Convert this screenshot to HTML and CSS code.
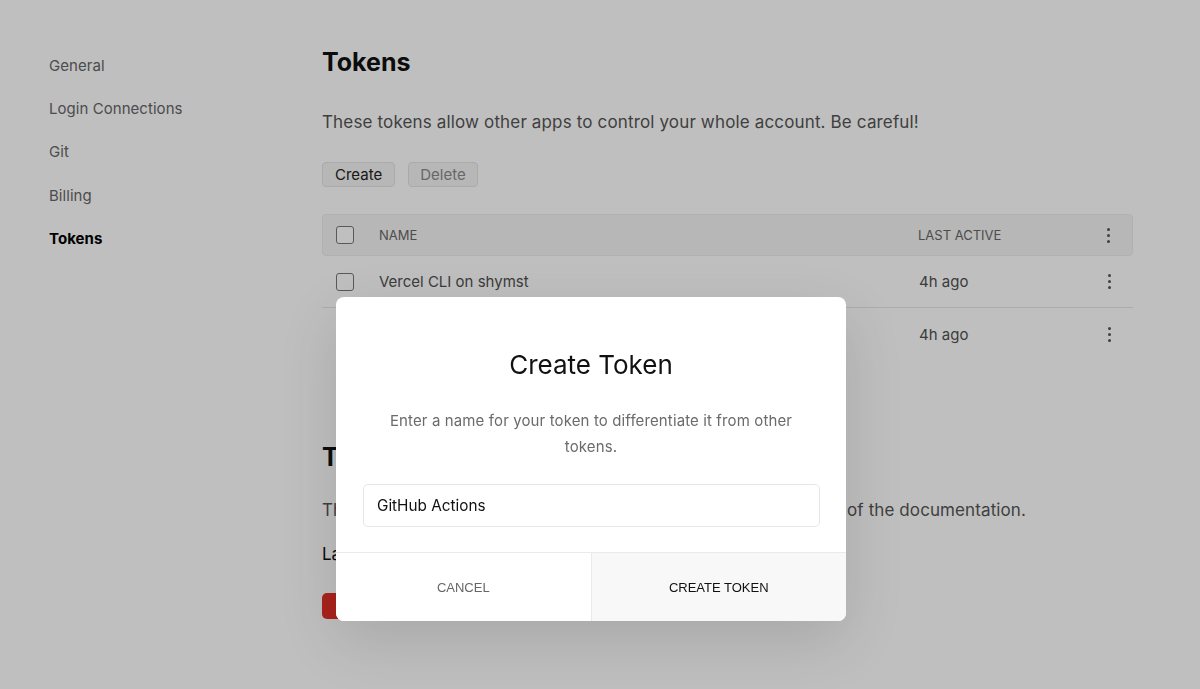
FILE: index.html
```html
<!DOCTYPE html>
<html lang="en">
<head>
<meta charset="utf-8">
<title>Tokens</title>
<link rel="stylesheet" href="styles.css">
</head>
<body>
<div class="page">
  <nav class="sidebar">
    <a class="nav-item">General</a>
    <a class="nav-item">Login Connections</a>
    <a class="nav-item">Git</a>
    <a class="nav-item">Billing</a>
    <a class="nav-item active">Tokens</a>
  </nav>
  <main class="main">
    <h1 class="title">Tokens</h1>
    <p class="lead">These tokens allow other apps to control your whole account. Be careful!</p>
    <div class="actions">
      <button class="btn">Create</button>
      <button class="btn disabled">Delete</button>
    </div>
    <div class="table">
      <div class="row head">
        <span class="cell-check"><span class="checkbox"></span></span>
        <span>NAME</span>
        <span>LAST ACTIVE</span>
        <span class="kebab"><i></i><i></i><i></i></span>
      </div>
      <div class="row">
        <span class="cell-check"><span class="checkbox"></span></span>
        <span>Vercel CLI on shymst</span>
        <span>4h ago</span>
        <span class="kebab"><i></i><i></i><i></i></span>
      </div>
      <div class="row">
        <span class="cell-check"><span class="checkbox"></span></span>
        <span>GitHub Integration</span>
        <span>4h ago</span>
        <span class="kebab"><i></i><i></i><i></i></span>
      </div>
    </div>
    <h2 class="title second">Token Limits</h2>
    <p class="lead tight">The number of tokens is limited. See more in the Tokens section of the documentation.</p>
    <p class="plain">Last revoked: never</p>
    <button class="btn-danger">Revoke All Tokens</button>
  </main>
</div>
<div class="overlay"></div>
<div class="modal">
  <h3 class="modal-title">Create Token</h3>
  <p class="modal-desc">Enter a name for your token to differentiate it from other tokens.</p>
  <div class="input">GitHub Actions</div>
  <div class="modal-footer">
    <button class="mbtn cancel">CANCEL</button>
    <button class="mbtn confirm">CREATE TOKEN</button>
  </div>
</div>
</body>
</html>
```

FILE: styles.css
```css
* { box-sizing: border-box; }
html, body { margin: 0; padding: 0; background: #fff; }
body {
  font-family: Inter, "Noto Sans", sans-serif;
  color: #111;
  width: 1200px;
  height: 689px;
  overflow: hidden;
}
.page {
  display: flex;
  padding-left: 49px;
}
.sidebar {
  width: 273px;
  display: flex;
  flex-direction: column;
  padding-top: 55px;
  gap: 21.2px;
}
.nav-item {
  font-size: 15px;
  line-height: 22px;
  color: #666;
  letter-spacing: 0.05px;
}
.nav-item.active { color: #000; font-weight: 700; }
.main {
  width: 811px;
  padding-top: 47px;
}
.title {
  margin: 0;
  font-size: 25px;
  line-height: 31px;
  font-weight: 700;
}
.title.second { margin-top: 82px; }
.lead {
  margin: 31px 0 0;
  font-size: 17px;
  line-height: 26px;
  color: #555;
  letter-spacing: 0.15px;
  white-space: nowrap;
}
.lead.tight { letter-spacing: 0.1px; }
.second + .lead { margin-top: 24px; }
.plain {
  margin: 18px 0 0;
  font-size: 17px;
  line-height: 26px;
  color: #111;
}
.actions {
  display: flex;
  gap: 13px;
  margin-top: 27px;
}
.btn {
  font-family: Inter, sans-serif;
  font-size: 15px;
  height: 25px;
  padding: 0 12px;
  border: 1px solid #e3e3e3;
  border-radius: 4px;
  background: #f5f5f5;
  color: #222;
}
.btn.disabled { color: #8a8a8a; padding: 0 11px; }
.table { margin-top: 27px; }
.row {
  display: grid;
  grid-template-columns: 43px 1fr 178px 24px;
  align-items: center;
  height: 52px;
  padding: 0 12px 0 14px;
  border-bottom: 1px solid #e6e6e6;
  font-size: 15px;
  color: #505050;
}
.row:last-child { border-bottom: none; }
.row.head {
  height: 42px;
  background: #f5f5f5;
  border: 1px solid #ebebeb;
  border-radius: 4px;
  padding: 0 12px 0 13px;
  font-size: 13px;
  color: #666;
}
.checkbox {
  display: block;
  width: 18px;
  height: 18px;
  border: 1.5px solid #777;
  border-radius: 3px;
  background: #fff;
}
.kebab {
  display: flex;
  flex-direction: column;
  align-items: center;
  gap: 3px;
}
.kebab i {
  width: 3px;
  height: 3px;
  border-radius: 50%;
  background: #555;
}
.btn-danger {
  margin-top: 26px;
  height: 26px;
  padding: 0 14px;
  border: none;
  border-radius: 5px;
  background: #e02f25;
  color: #fff;
  font-family: Inter, sans-serif;
  font-size: 14px;
}
.overlay {
  position: fixed;
  inset: 0;
  background: rgba(0, 0, 0, 0.25);
}
.modal {
  position: absolute;
  left: 336px;
  top: 297px;
  width: 510px;
  height: 324px;
  background: #fff;
  border-radius: 8px;
  box-shadow: 0 20px 60px rgba(0, 0, 0, 0.12);
  display: flex;
  flex-direction: column;
  overflow: hidden;
}
.modal-title {
  margin: 52px 0 0;
  text-align: center;
  font-size: 26px;
  line-height: 32px;
  font-weight: 400;
  color: #111;
}
.modal-desc {
  margin: 27px 0 0;
  padding: 0 46px;
  text-align: center;
  font-size: 15px;
  line-height: 26px;
  color: #6b6b6b;
  letter-spacing: 0.12px;
}
.input {
  margin: 24px 26px 0 27px;
  height: 43px;
  border: 1px solid #e6e6e6;
  border-radius: 5px;
  padding: 0 13px;
  display: flex;
  align-items: center;
  font-size: 15.3px;
  color: #111;
}
.modal-footer {
  margin-top: auto;
  height: 69px;
  display: flex;
  border-top: 1px solid #eaeaea;
}
.mbtn {
  flex: 1;
  border: none;
  background: #fff;
  font-family: "Liberation Sans", Arial, sans-serif;
  font-size: 13px;
  padding: 0;
}
.mbtn.cancel { color: #666; }
.mbtn.confirm {
  background: #f8f8f8;
  border-left: 1px solid #eaeaea;
  color: #111;
}
```
